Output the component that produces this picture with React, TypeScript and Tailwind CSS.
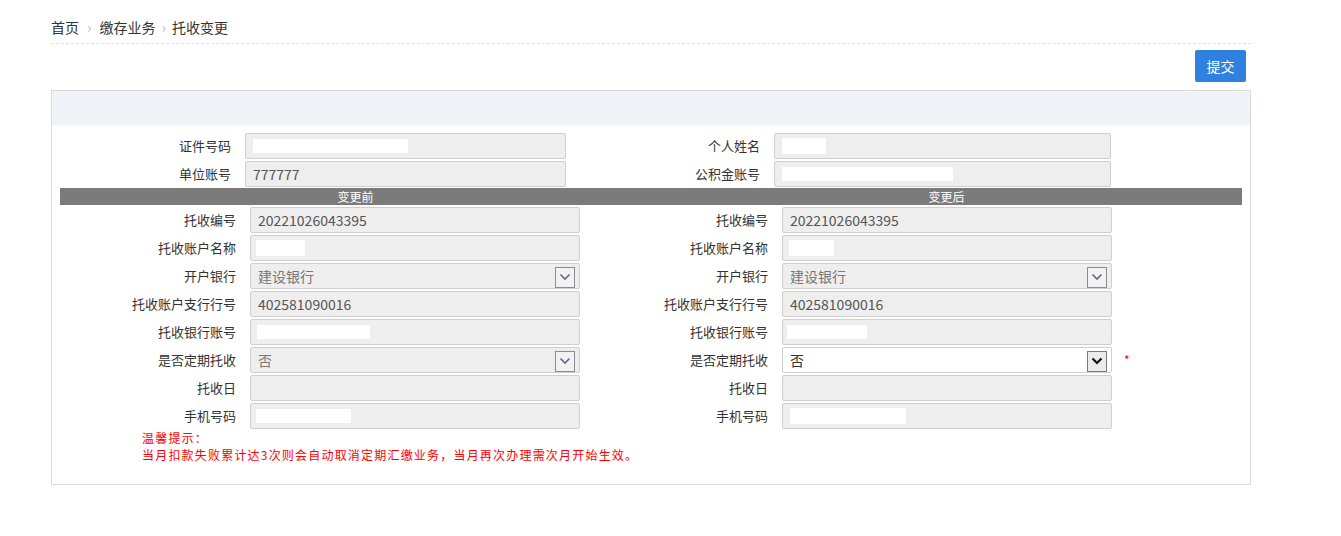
import React from 'react';

const FONT = { fontFamily: '"Microsoft YaHei", "Noto Sans CJK SC", "Liberation Sans", sans-serif' };

interface FieldProps {
  label: string;
  labelW: string;
  inputW: string;
  value?: string;
  blank?: string;
  select?: boolean;
  active?: boolean;
  star?: boolean;
}

const Chevron: React.FC<{ active?: boolean }> = ({ active }) => (
  <span
    className={`absolute right-[4px] top-[2.5px] flex h-[21px] w-[20px] items-center justify-center border ${
      active ? 'border-[#7a7a7a] bg-[#ececec]' : 'border-[#8c8c8c] bg-[#f2f2f2]'
    }`}
  >
    <svg width="12" height="8" viewBox="0 0 12 8">
      <path
        d="M1.5 1.5 L6 6 L10.5 1.5"
        fill="none"
        stroke={active ? '#111' : '#5b6b86'}
        strokeWidth={active ? 2.2 : 1.6}
      />
    </svg>
  </span>
);

const Field: React.FC<FieldProps> = ({ label, labelW, inputW, value, blank, select, active, star }) => (
  <div className="flex items-center">
    <span className={`${labelW} text-right text-[13px] text-[#333] pr-[14px] whitespace-nowrap`}>{label}</span>
    <div
      className={`relative h-[26px] ${inputW} rounded-[2px] border border-[#cfcfcf] ${
        active ? 'bg-white' : 'bg-[#eeeeee]'
      } flex items-center pl-[7px] text-[14px] ${active ? 'text-[#333]' : select ? 'text-[#777]' : 'text-[#555]'}`}
    >
      {value}
      {blank && <span className={`h-[14px] bg-white ${blank}`} />}
      {select && <Chevron active={active} />}
    </div>
    {star && <span className="ml-[12px] text-[12px] text-[#e00]">*</span>}
  </div>
);

type Row = { label: string; value?: string; blank?: string; select?: boolean };

const before: Row[] = [
  { label: '托收编号', value: '20221026043395' },
  { label: '托收账户名称', blank: 'w-[49px] ml-[-2px] h-[16px]' },
  { label: '开户银行', value: '建设银行', select: true },
  { label: '托收账户支行行号', value: '402581090016' },
  { label: '托收银行账号', blank: 'w-[113px] ml-[-1px]' },
  { label: '是否定期托收', value: '否', select: true },
  { label: '托收日' },
  { label: '手机号码', blank: 'w-[95px] ml-[-2px]' },
];

const after: Row[] = [
  { label: '托收编号', value: '20221026043395' },
  { label: '托收账户名称', blank: 'w-[45px] ml-[-1px] h-[16px]' },
  { label: '开户银行', value: '建设银行', select: true },
  { label: '托收账户支行行号', value: '402581090016' },
  { label: '托收银行账号', blank: 'w-[80px] ml-[-3px]' },
  { label: '是否定期托收', value: '否', select: true },
  { label: '托收日' },
  { label: '手机号码', blank: 'w-[116px] ml-[0px] h-[16px]' },
];

export default function App() {
  return (
    <div className="min-h-[536px] bg-white" style={FONT}>
      <div className="ml-[51px] w-[1200px]">
        <div className="flex h-[44px] items-center border-b border-dashed border-[#e2e2e2] pt-[12px] text-[14px] text-[#333]">
          <span>首页</span>
          <span className="mx-[8px] text-[15px] text-[#bbb]">›</span>
          <span>缴存业务</span>
          <span className="mx-[6px] text-[15px] text-[#bbb]">›</span>
          <span>托收变更</span>
        </div>
        <div className="flex justify-end pr-[5px] pt-[6px]">
          <button className="h-[32px] w-[51px] rounded-[2px] bg-[#2f80df] text-[14px] text-white">提交</button>
        </div>
        <div className="mt-[8px] border border-[#dcdcdc]">
          <div className="h-[34px] bg-[#f0f4f8]" />
          <div className="flex flex-col gap-[2px] pt-[8px]">
            <div className="flex">
              <Field label="证件号码" labelW="w-[193px]" inputW="w-[321px]" blank="w-[155px]" />
              <Field label="个人姓名" labelW="w-[208px]" inputW="w-[337px]" blank="w-[44px] h-[16px]" />
            </div>
            <div className="flex">
              <Field label="单位账号" labelW="w-[193px]" inputW="w-[321px]" value="777777" />
              <Field label="公积金账号" labelW="w-[208px]" inputW="w-[337px]" blank="w-[171px] h-[10px]" />
            </div>
          </div>
          <div className="mx-[8px] mt-[1px] flex h-[17px] bg-[#7b7b7b] text-[12px] leading-[17px] text-white">
            <div className="flex-1 text-center">变更前</div>
            <div className="flex-1 text-center">变更后</div>
          </div>
          <div className="flex flex-col gap-[2px] pt-[2px]">
            {before.map((b, i) => {
              const a = after[i];
              return (
                <div key={b.label} className="flex">
                  <Field label={b.label} labelW="w-[198px]" inputW="w-[330px]" value={b.value} blank={b.blank} select={b.select} />
                  <Field
                    label={a.label}
                    labelW="w-[202px]"
                    inputW="w-[330px]"
                    value={a.value}
                    blank={a.blank}
                    select={a.select}
                    active={i === 5}
                    star={i === 5}
                  />
                </div>
              );
            })}
          </div>
          <div className="pl-[90px] pb-[21px] text-[12px] leading-[17px] tracking-[1.2px] text-[#f00]">
            <div>温馨提示：</div>
            <div>当月扣款失败累计达3次则会自动取消定期汇缴业务，当月再次办理需次月开始生效。</div>
          </div>
        </div>
      </div>
    </div>
  );
}
